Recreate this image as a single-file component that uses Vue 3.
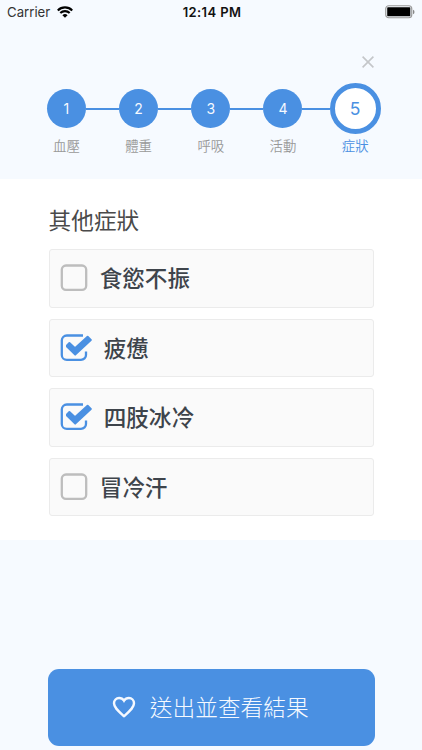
<script setup>
import { ref } from 'vue'

const steps = ['血壓', '體重', '呼吸', '活動', '症狀']
const current = 4
const symptoms = ref([
  { name: '食慾不振', checked: false },
  { name: '疲憊', checked: true },
  { name: '四肢冰冷', checked: true },
  { name: '冒冷汗', checked: false },
])
</script>

<template>
  <main class="screen">
    <header class="status">
      <div class="carrier">
        <span>Carrier</span>
        <svg class="wifi" viewBox="0 0 16 12">
          <path d="M.8 4.4a10.2 10.2 0 0 1 14.4 0" />
          <path d="M3.3 7.1a6.6 6.6 0 0 1 9.4 0" />
          <path class="dot" d="M5.4 9.2a3.7 3.7 0 0 1 5.2 0L8 11.8z" />
        </svg>
      </div>
      <span class="time">12:14 PM</span>
      <svg class="battery" viewBox="0 0 30 14">
        <rect class="shell" x=".75" y=".75" width="26" height="12" rx="3" />
        <rect x="2.2" y="2.2" width="23.1" height="9.1" rx=".8" />
        <path class="tip" d="M28 4.7q1.5.5 1.5 2.2T28 9.2z" />
      </svg>
    </header>

    <div class="close-row">
      <button class="close" aria-label="關閉">
        <svg viewBox="0 0 12 12"><path d="M.6.6l10.8 10.8M11.4.6L.6 11.4" /></svg>
      </button>
    </div>

    <nav class="steps">
      <div v-for="(label, i) in steps" :key="label" class="step" :class="{ active: i === current }">
        <div class="marker"><span class="circle">{{ i + 1 }}</span></div>
        <span class="label">{{ label }}</span>
      </div>
    </nav>

    <section class="panel">
      <h1>其他症狀</h1>
      <ul>
        <li v-for="item in symptoms" :key="item.name" @click="item.checked = !item.checked">
          <svg v-if="item.checked" class="box on" viewBox="0 0 32 28">
            <path d="M23 1.5H6.8A5 5 0 0 0 1.8 6.5V20.9A5 5 0 0 0 6.8 25.9H21A5 5 0 0 0 26 20.9V17.6" />
            <path class="tick" d="M7 11.4L9.4 9L15 14.2L27.6 2.8L30.8 6L15.2 20.6L7 12.6Z" />
          </svg>
          <svg v-else class="box" viewBox="0 0 28 28">
            <rect x="1.8" y="1.5" width="24.4" height="24.4" rx="4.2" />
          </svg>
          <span>{{ item.name }}</span>
        </li>
      </ul>
    </section>

    <footer>
      <button class="submit">
        <svg viewBox="0 0 24 22">
          <path d="M12 20.2C6.2 15 2 11.6 2 7.3C2 4.3 4.3 2 7.1 2C9.1 2 10.9 3 12 4.7C13.1 3 14.9 2 16.9 2C19.7 2 22 4.3 22 7.3C22 11.6 17.8 15 12 20.2Z" />
        </svg>
        <span>送出並查看結果</span>
      </button>
    </footer>
  </main>
</template>

<style>
body { margin: 0; background: #f6faff; }
</style>

<style scoped>
* { box-sizing: border-box; }
.screen {
  display: flex;
  flex-direction: column;
  height: 750px;
  overflow: hidden;
  background: #f6faff;
  font-family: Inter, "Noto Sans CJK TC", sans-serif;
}
button { border: 0; padding: 0; background: none; font: inherit; }
svg { display: block; fill: none; flex: none; }
.status {
  display: grid;
  grid-template-columns: 1fr auto 1fr;
  align-items: center;
  height: 24px;
  padding: 0 7px;
  color: #111;
  font-size: 13.2px;
}
.carrier { display: flex; align-items: center; gap: 7px; color: #333; }
.wifi { width: 16px; height: 12px; stroke: #000; stroke-width: 2.1; }
.wifi .dot { fill: #000; stroke: none; }
.time { font-weight: 600; font-size: 13px; letter-spacing: .4px; padding-left: 2px; }
.battery { width: 30px; height: 14px; justify-self: end; fill: #000; }
.shell { fill: none; stroke: #999; stroke-width: 1.2; }
.tip { fill: #888; }
.close-row { display: flex; justify-content: flex-end; height: 59px; padding: 32px 48px 0 0; }
.close { width: 12px; height: 12px; }
.close svg { width: 12px; height: 12px; stroke: #c4c6c9; stroke-width: 1.6; }
.steps {
  display: grid;
  grid-template-columns: repeat(5, 72.2px);
  justify-content: center;
  height: 96px;
  margin-right: .4px;
}
.marker { display: flex; align-items: center; height: 51px; }
.marker::before, .marker::after { content: ""; flex: 1; height: 2px; background: #4a90e2; }
.step:first-child .marker::before, .step:last-child .marker::after { background: none; }
.circle {
  display: grid;
  place-items: center;
  width: 39px;
  height: 39px;
  border-radius: 50%;
  background: #4a90e2;
  color: #f5f9ff;
  font-size: 14px;
}
.active .circle {
  width: 51px;
  height: 51px;
  border: 5px solid #4a90e2;
  background: #fff;
  color: #4a90e2;
  font-size: 17.5px;
}
.label { display: block; margin-top: 2px; text-align: center; font-size: 13.4px; line-height: 20px; font-weight: 350; color: #999; }
.active .label { color: #4a90e2; }
.panel { height: 361px; padding: 25px 48.5px 0; background: #fff; }
h1 { margin: 0; height: 45px; padding-top: 1px; font-size: 22.6px; line-height: 32px; letter-spacing: .1px; font-weight: 400; color: #4a4a4a; }
ul { display: grid; gap: 11px; margin: 0; padding: 0; list-style: none; }
li {
  display: flex;
  align-items: center;
  gap: 11.7px;
  height: 58.6px;
  padding-left: 10.5px;
  border: 1px solid #ebebeb;
  border-radius: 3px;
  background: #fafafa;
  color: #3e444b;
  font-size: 22.6px;
  font-weight: 500;
  line-height: 32px;
}
li span { padding-top: 2px; }
.box { width: 28px; height: 28px; stroke: #bdbdbd; stroke-width: 2.3; }
.box.on { width: 32px; stroke: #4a90e2; stroke-width: 2.3; }
.box .tick { fill: #4a90e2; stroke-width: 2; stroke-linejoin: round; }
footer { padding: 129px 47.5px 0; }
.submit {
  display: flex;
  align-items: center;
  justify-content: center;
  gap: 13.5px;
  width: 100%;
  height: 76.5px;
  padding-right: 1px;
  border-radius: 11px;
  background: #4a90e2;
  color: #f5f9ff;
  font-size: 22.7px;
  font-weight: 300;
}
.submit span { margin-top: -2px; }
.submit svg { width: 24px; height: 22px; stroke: #f5f9ff; stroke-width: 2.4; }
</style>
